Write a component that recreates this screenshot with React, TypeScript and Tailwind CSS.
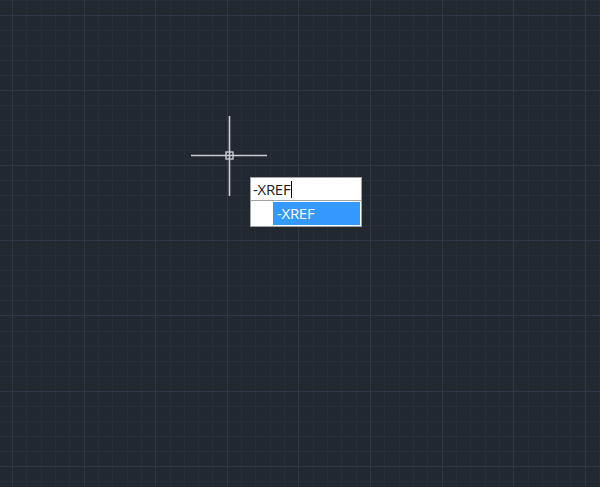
import React from "react";

const W = 600;
const H = 487;
const SX = 14.32;
const SY = 15.04;
const X0 = 12;
const Y0 = 14.7;

function Grid() {
  const minorV: number[] = [];
  const majorV: number[] = [];
  for (let i = -1; X0 + i * SX < W; i++) {
    const x = Math.round(X0 + i * SX) + 0.5;
    if (x < 0) continue;
    ((i % 5) + 5) % 5 === 0 ? majorV.push(x) : minorV.push(x);
  }
  const minorH: number[] = [];
  const majorH: number[] = [];
  for (let i = -1; Y0 + i * SY < H; i++) {
    const y = Math.round(Y0 + i * SY) + 0.5;
    if (y < 0) continue;
    ((i % 5) + 5) % 5 === 0 ? majorH.push(y) : minorH.push(y);
  }
  return (
    <svg className="absolute inset-0" width={W} height={H} viewBox={`0 0 ${W} ${H}`}>
      <g stroke="#272e39" strokeWidth="1" shapeRendering="crispEdges">
        {minorV.map((x) => (
          <line key={"mv" + x} x1={x} y1={0} x2={x} y2={H} />
        ))}
        {minorH.map((y) => (
          <line key={"mh" + y} x1={0} y1={y} x2={W} y2={y} />
        ))}
      </g>
      <g stroke="#303647" strokeWidth="1" shapeRendering="crispEdges">
        {majorV.map((x) => (
          <line key={"Mv" + x} x1={x} y1={0} x2={x} y2={H} />
        ))}
        {majorH.map((y) => (
          <line key={"Mh" + y} x1={0} y1={y} x2={W} y2={y} />
        ))}
      </g>
      {/* crosshair */}
      <g stroke="#c9ccd1" strokeWidth="1.6" fill="none">
        <line x1={191} y1={155.5} x2={267} y2={155.5} />
        <line x1={229.5} y1={116} x2={229.5} y2={196} />
        <rect x={226} y={152} width={7} height={7} strokeWidth="1.4" />
      </g>
    </svg>
  );
}

export default function App() {
  return (
    <div
      className="relative w-[600px] h-[487px] overflow-hidden bg-[#212830]"
      style={{ fontFamily: '"Open Sans", "Noto Sans", sans-serif' }}
    >
      <Grid />
      <div className="absolute left-[250px] top-[177px] w-[112px] flex flex-col">
        <div className="h-[24px] border border-[#a3a3a3] bg-white flex items-center pl-[2px]">
          <span className="text-[15px] leading-none text-[#1b1b1b] tracking-[-0.3px]">-XREF</span>
          <span className="w-px h-[17px] bg-black ml-px" />
        </div>
        <div className="h-[26px] border-x border-b border-[#a3a3a3] bg-white pl-[22px] pr-px pt-px pb-px">
          <div className="h-full bg-[#3399ff] flex items-center pl-[4px]">
            <span className="text-[15px] leading-none text-white tracking-[-0.3px]">-XREF</span>
          </div>
        </div>
      </div>
    </div>
  );
}
